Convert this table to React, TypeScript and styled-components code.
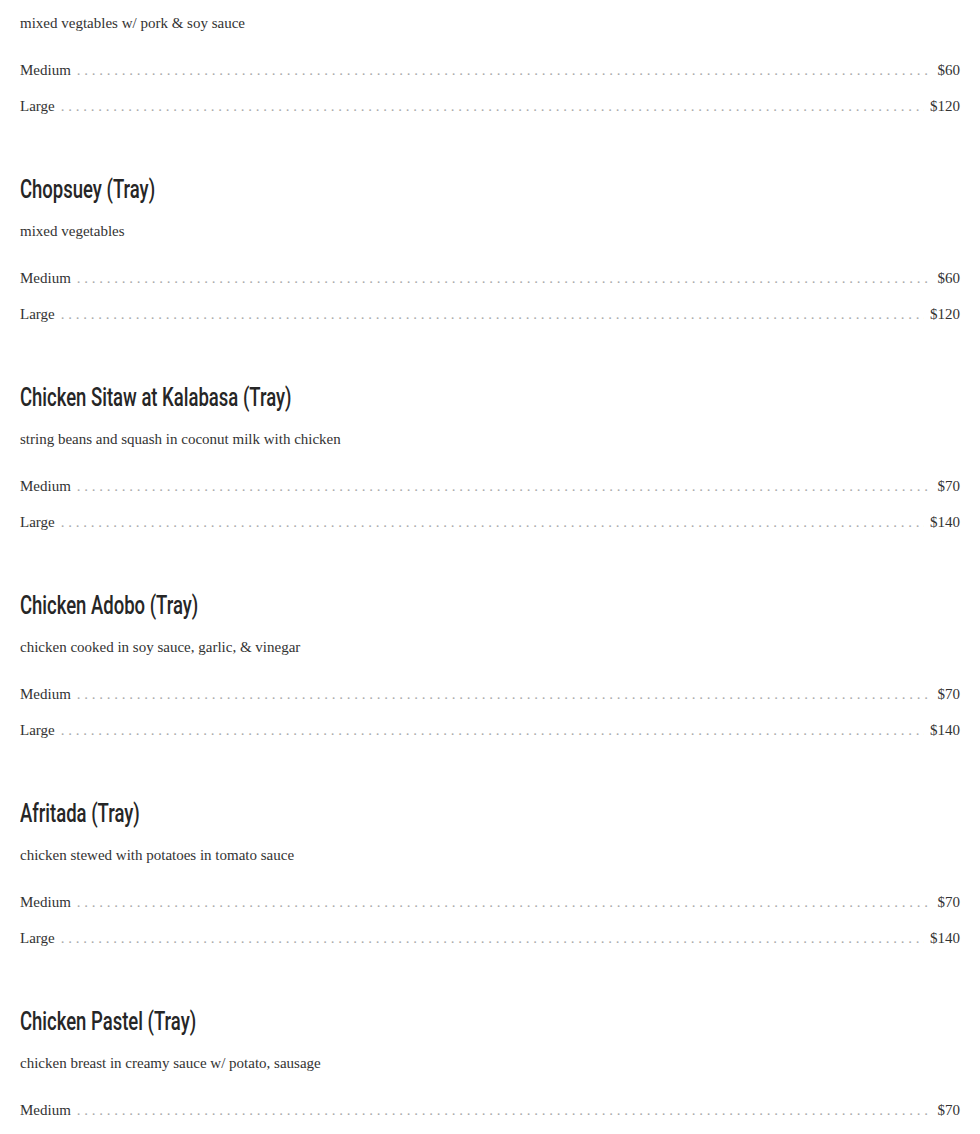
import React from "react";
import styled, { createGlobalStyle } from "styled-components";

interface IPrice {
  size: string;
  price: string;
}

interface IDish {
  id: number;
  name?: string;
  desc: string;
  prices: IPrice[];
}

const tray = (medium: number): IPrice[] => [
  { size: "Medium", price: `$${medium}` },
  { size: "Large", price: `$${medium * 2}` },
];

const dishes: IDish[] = [
  { id: 0, desc: "mixed vegtables w/ pork & soy sauce", prices: tray(60) },
  { id: 1, name: "Chopsuey (Tray)", desc: "mixed vegetables", prices: tray(60) },
  {
    id: 2,
    name: "Chicken Sitaw at Kalabasa (Tray)",
    desc: "string beans and squash in coconut milk with chicken",
    prices: tray(70),
  },
  {
    id: 3,
    name: "Chicken Adobo (Tray)",
    desc: "chicken cooked in soy sauce, garlic, & vinegar",
    prices: tray(70),
  },
  {
    id: 4,
    name: "Afritada (Tray)",
    desc: "chicken stewed with potatoes in tomato sauce",
    prices: tray(70),
  },
  {
    id: 5,
    name: "Chicken Pastel (Tray)",
    desc: "chicken breast in creamy sauce w/ potato, sausage",
    prices: tray(70),
  },
];

const dots = ". ".repeat(200);

const App = () => {
  return (
    <>
      <GlobalStyle />
      <Menu>
        {dishes.map((d) => (
          <Dish key={d.id}>
            {d.name && (
              <Title>
                <span>{d.name}</span>
              </Title>
            )}
            <Desc>{d.desc}</Desc>
            <Prices>
              {d.prices.map((p) => (
                <Row key={p.size}>
                  <span>{p.size}</span>
                  <Leader>{dots}</Leader>
                  <span>{p.price}</span>
                </Row>
              ))}
            </Prices>
          </Dish>
        ))}
      </Menu>
    </>
  );
};

export default App;

const GlobalStyle = createGlobalStyle`
  body {
    margin: 0;
    background: #fff;
    color: #333;
    font-family: "Liberation Serif", "Times New Roman", serif;
  }
`;

const Menu = styled.div`
  padding: 11px 20px 0;
  display: flex;
  flex-direction: column;
  gap: 56px;
`;

const Dish = styled.section`
  display: flex;
  flex-direction: column;
`;

// condensed display face isn't installed, so squeeze Roboto
const Title = styled.h2`
  margin: 0 0 14px;
  padding-top: 1px;
  font-family: Roboto, "Liberation Sans", sans-serif;
  font-weight: 500;
  font-size: 25px;
  line-height: 30px;
  color: #262626;

  span {
    display: inline-block;
    transform: scaleX(0.74);
    transform-origin: left center;
    white-space: nowrap;
  }
`;

const Desc = styled.p`
  margin: 0 0 23px;
  font-size: 15px;
  line-height: 24px;
`;

const Prices = styled.div`
  display: flex;
  flex-direction: column;
  gap: 12px;
`;

const Row = styled.div`
  display: flex;
  align-items: baseline;
  gap: 6px;
  font-size: 15px;
  line-height: 24px;
`;

const Leader = styled.span`
  flex: 1;
  overflow: hidden;
  white-space: nowrap;
  color: #aaa;
`;
